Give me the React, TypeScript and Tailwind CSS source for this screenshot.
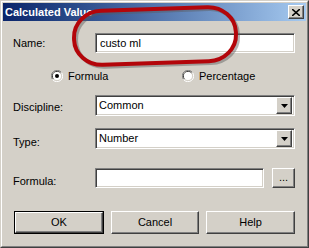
import React from "react";

const font = { fontFamily: '"Liberation Sans", Arial, sans-serif' };

function Sunken({ className = "", children }: { className?: string; children?: React.ReactNode }) {
  return (
    <div
      className={`bg-white border border-t-[#808080] border-l-[#808080] border-b-white border-r-white shadow-[inset_1px_1px_0_#404040,inset_-1px_-1px_0_#d4d0c8] ${className}`}
    >
      {children}
    </div>
  );
}

function RaisedBtn({ className = "", children }: { className?: string; children?: React.ReactNode }) {
  return (
    <div
      className={`bg-[#d4d0c8] border border-t-white border-l-white border-b-[#404040] border-r-[#404040] shadow-[inset_-1px_-1px_0_#808080] flex items-center justify-center ${className}`}
    >
      {children}
    </div>
  );
}

function Combo({ value }: { value: string }) {
  return (
    <Sunken className="w-[200px] h-[21px] flex items-center pl-[3px] pr-[2px]">
      <span className="flex-1 text-[11px] text-black leading-none">{value}</span>
      <RaisedBtn className="w-[16px] h-[17px]">
        <svg width="7" height="4" viewBox="0 0 7 4">
          <path d="M0 0H7L3.5 4Z" fill="#000" />
        </svg>
      </RaisedBtn>
    </Sunken>
  );
}

function Radio({ checked }: { checked?: boolean }) {
  return (
    <svg width="12" height="12" viewBox="0 0 12 12">
      <path d="M10.5 2.5A5.5 5.5 0 0 0 1.5 9.5" stroke="#808080" fill="none" />
      <path d="M9.5 3A4.5 4.5 0 0 0 2.5 9" stroke="#404040" fill="none" />
      <circle cx="6" cy="6" r="4" fill="#fff" />
      <path d="M1.5 9.5A5.5 5.5 0 0 0 10.5 2.5" stroke="#fff" fill="none" />
      {checked && <circle cx="6" cy="6" r="2" fill="#000" />}
    </svg>
  );
}

export default function App() {
  return (
    <div style={font} className="relative w-[309px] h-[248px] bg-[#d4d0c8] text-black overflow-hidden">
      <div className="w-full h-full border border-t-[#d4d0c8] border-l-[#d4d0c8] border-b-[#404040] border-r-[#404040]">
        <div className="w-full h-full border border-t-white border-l-white border-b-[#808080] border-r-[#808080] p-px flex flex-col">
          {/* title bar */}
          <div className="h-[18px] bg-gradient-to-r from-[#0a246a] to-[#a6caf0] flex items-center pl-[2px] pr-[2px]">
            <span className="flex-1 text-white font-bold text-[11px] leading-none">Calculated Value</span>
            <RaisedBtn className="w-[16px] h-[14px]">
              <svg width="8" height="7" viewBox="0 0 8 7">
                <path d="M0 0L8 7M8 0L0 7" stroke="#000" strokeWidth="1.6" />
              </svg>
            </RaisedBtn>
          </div>

          <div className="flex flex-col pl-[10px] pr-[11px] text-[11px]">
            {/* Name */}
            <div className="flex items-center mt-[12px] h-[20px]">
              <span className="w-[82px]">Name:</span>
              <Sunken className="w-[200px] h-[20px] flex items-center pl-[4px]">
                <span className="leading-none">custo ml</span>
              </Sunken>
            </div>

            {/* radios */}
            <div className="flex items-center mt-[16px] h-[14px]">
              <div className="w-[169px] pl-[38px] flex items-center gap-[5px]">
                <Radio checked />
                <span>Formula</span>
              </div>
              <div className="flex items-center gap-[5px]">
                <Radio />
                <span>Percentage</span>
              </div>
            </div>

            {/* Discipline */}
            <div className="flex items-center mt-[12px] h-[21px]">
              <span className="w-[82px] pt-[3px]">Discipline:</span>
              <Combo value="Common" />
            </div>

            {/* Type */}
            <div className="flex items-center mt-[12px] h-[21px]">
              <span className="w-[82px] pt-[8px]">Type:</span>
              <Combo value="Number" />
            </div>

            {/* Formula */}
            <div className="flex items-center mt-[19px] h-[20px]">
              <span className="w-[82px] pt-[6px]">Formula:</span>
              <Sunken className="w-[169px] h-[20px]" />
              <RaisedBtn className="ml-[8px] w-[23px] h-[20px] text-[11px] leading-none">
                <span className="-mt-[2px]">...</span>
              </RaisedBtn>
            </div>

            {/* Buttons */}
            <div className="flex items-center mt-[23px] gap-[7px] pl-[1px]">
              <div className="border border-black">
                <RaisedBtn className="w-[88px] h-[21px] text-[11px]">OK</RaisedBtn>
              </div>
              <RaisedBtn className="w-[89px] h-[23px] text-[11px]">Cancel</RaisedBtn>
              <RaisedBtn className="w-[90px] h-[23px] text-[11px]">Help</RaisedBtn>
            </div>
          </div>
        </div>
      </div>

      {/* red annotation */}
      <svg className="absolute left-0 top-0 pointer-events-none" width="309" height="248" viewBox="0 0 309 248">
        <g transform="rotate(-2 155 36)">
          <rect x="76" y="11" width="162" height="54" rx="28" ry="26" fill="none" stroke="rgba(90,90,90,0.45)" strokeWidth="4" />
          <rect x="74" y="9" width="162" height="54" rx="28" ry="26" fill="none" stroke="#b3050a" strokeWidth="4" />
        </g>
      </svg>
    </div>
  );
}
